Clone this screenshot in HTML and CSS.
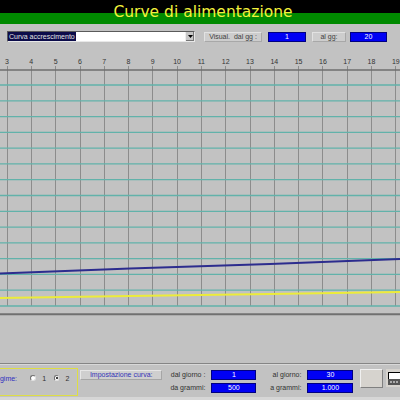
FILE: index.html
```html
<!DOCTYPE html>
<html>
<head>
<meta charset="utf-8">
<link rel="stylesheet" href="styles.css">
</head>
<body>
<div class="header"><span class="title">Curve di alimentazione</span></div>
<div class="toolbar">
  <div class="select"><span class="sel-text">Curva accrescimento</span><span class="sel-btn"><svg width="5" height="3" viewBox="0 0 5 3"><path d="M0 0H5L2.5 3Z" fill="#000"/></svg></span></div>
  <div class="lbl lbl-dal">Visual.&nbsp; dal gg :</div>
  <div class="field f-dal">1</div>
  <div class="lbl lbl-al">al gg:</div>
  <div class="field f-al">20</div>
</div>
<div class="chart">
<svg class="plot" width="400" height="266" viewBox="0 0 400 266">
  <g class="labels" font-family="Liberation Sans, Arial, sans-serif" font-size="7" fill="#333" text-anchor="middle">
    <text x="7" y="13.5">3</text><text x="31.3" y="13.5">4</text><text x="55.6" y="13.5">5</text><text x="79.9" y="13.5">6</text><text x="104.2" y="13.5">7</text><text x="128.5" y="13.5">8</text><text x="152.8" y="13.5">9</text><text x="177.1" y="13.5">10</text><text x="201.4" y="13.5">11</text><text x="225.7" y="13.5">12</text><text x="250" y="13.5">13</text><text x="274.3" y="13.5">14</text><text x="298.6" y="13.5">15</text><text x="322.9" y="13.5">16</text><text x="347.2" y="13.5">17</text><text x="371.5" y="13.5">18</text><text x="395.8" y="13.5">19</text>
  </g>
  <g stroke="#8c8c8c" stroke-width="1">
    <path d="M7.5 16V256M31.5 16V256M55.5 16V256M80.5 16V256M104.5 16V256M128.5 16V256M152.5 16V256M177.5 16V256M201.5 16V256M225.5 16V256M250.5 16V256M274.5 16V256M298.5 16V256M322.5 16V256M347.5 16V256M371.5 16V256M395.5 16V256"/>
  </g>
  <g stroke="#62b2aa" stroke-width="1.3">
    <path d="M0 35H400M0 50.8H400M0 66.6H400M0 82.4H400M0 98.1H400M0 113.9H400M0 129.7H400M0 145.5H400M0 161.3H400M0 177.1H400M0 192.9H400M0 208.6H400M0 224.4H400M0 240.2H400M0 256H400"/>
  </g>
  <path d="M0 20H400" stroke="#6e6e6e" stroke-width="1.6"/>
  <path d="M0 223.5L130 218.5L270 214L400 209" stroke="#2c2c8e" stroke-width="2" fill="none"/>
  <path d="M0 248L130 246L270 244L400 242" stroke="#ecec3a" stroke-width="2" fill="none"/>
  <path d="M0 264.3H400" stroke="#707070" stroke-width="2"/>
</svg>
</div>
<div class="bottom">
  <div class="regime">
    <span class="reg-lbl">Regime:</span>
    <span class="radio r1"></span><span class="rtxt">1</span>
    <span class="radio r2"><span class="dot"></span></span><span class="rtxt">2</span>
  </div>
  <div class="imp">Impostazione curva:</div>
  <div class="form">
    <div class="flbl">dal giorno :</div>
    <div class="field">1</div>
    <div class="flbl">al giorno:</div>
    <div class="field">30</div>
    <div class="flbl">da grammi:</div>
    <div class="field">500</div>
    <div class="flbl">a grammi:</div>
    <div class="field">1.000</div>
  </div>
  <div class="btn"></div>
  <div class="icon">
    <svg width="14" height="18" viewBox="0 0 14 18">
      <rect x="0" y="0" width="14" height="18" fill="#d6d3ce"/>
      <rect x="2.5" y="3.5" width="12" height="7" fill="#fff" stroke="#000"/>
      <rect x="2" y="10" width="12" height="6" fill="#555"/>
      <rect x="4" y="12" width="2" height="2" fill="#aaa"/>
      <rect x="7" y="12" width="2" height="2" fill="#aaa"/>
      <rect x="10" y="12" width="2" height="2" fill="#aaa"/>
    </svg>
  </div>
</div>
</body>
</html>
```
FILE: styles.css
```css
html, body {
  margin: 0;
  padding: 0;
}
body {
  width: 400px;
  height: 400px;
  overflow: hidden;
  background: #c2c2c2;
  font-family: "Liberation Sans", Arial, sans-serif;
  font-size: 7px;
  color: #303030;
}
.header {
  height: 24px;
  box-sizing: border-box;
  padding: 3px 0 0 6px;
  background: linear-gradient(#000 0, #000 13px, #008a00 13px, #008a00 24px);
  text-align: center;
}
.title {
  font-family: "DejaVu Sans", Verdana, sans-serif;
  font-size: 15.5px;
  line-height: 18px;
  color: #f2f23c;
}
.toolbar {
  height: 26px;
  box-sizing: border-box;
  padding: 7px 0 0 7px;
  display: flex;
  align-items: flex-start;
}
.select {
  width: 188px;
  height: 11px;
  box-sizing: border-box;
  background: #fff;
  border-top: 1px solid #5a5a5a;
  border-left: 1px solid #5a5a5a;
  border-bottom: 1px solid #e8e8e8;
  border-right: 1px solid #e8e8e8;
  display: flex;
  align-items: stretch;
  justify-content: space-between;
}
.sel-text {
  background: #0c0c4a;
  color: #e4e4e4;
  line-height: 9px;
  padding: 0 1px;
}
.sel-btn {
  width: 8px;
  background: #c8c8c8;
  border-left: 1px solid #eee;
  box-shadow: inset -1px -1px #777;
  display: flex;
  align-items: center;
  justify-content: center;
}
.lbl {
  height: 10px;
  box-sizing: border-box;
  margin-top: 1px;
  background: #cdcdcd;
  border: 1px solid #e2e2e2;
  border-right-color: #a8a8a8;
  border-bottom-color: #a8a8a8;
  line-height: 8px;
  text-align: center;
  color: #404040;
}
.lbl-dal {
  width: 58px;
  margin-left: 9px;
}
.lbl-al {
  width: 34px;
  margin-left: 6px;
}
.field {
  height: 10px;
  box-sizing: border-box;
  background: #0000f4;
  border: 1px solid #000080;
  color: #fff;
  line-height: 8px;
  text-align: center;
}
.f-dal {
  width: 38px;
  margin-left: 6px;
  margin-top: 1px;
}
.f-al {
  width: 37px;
  margin-left: 4px;
  margin-top: 1px;
}
.chart {
  height: 313px;
}
.plot {
  display: block;
}
.bottom {
  height: 37px;
  box-sizing: border-box;
  border-top: 1px solid #858585;
  box-shadow: inset 0 1px #d8d8d8;
  display: flex;
  align-items: flex-start;
  padding-top: 4px;
  position: relative;
  border-bottom: 3px solid #d6d6d6;
}
.regime {
  width: 90px;
  height: 28px;
  margin-left: -12px;
  box-sizing: border-box;
  border: 1px solid #dede44;
  display: flex;
  align-items: center;
  padding: 0 0 8px 2px;
}
.reg-lbl {
  color: #2f2fc0;
  width: 41px;
}
.radio {
  width: 6px;
  height: 6px;
  box-sizing: border-box;
  border-radius: 50%;
  background: #fff;
  border: 1px solid #707070;
  border-right-color: #e0e0e0;
  border-bottom-color: #e0e0e0;
  display: flex;
  align-items: center;
  justify-content: center;
}
.dot {
  width: 2px;
  height: 2px;
  background: #000;
  border-radius: 50%;
}
.rtxt {
  margin-left: 6px;
  width: 12px;
}
.imp {
  width: 84px;
  height: 10px;
  box-sizing: border-box;
  margin: 2px 0 0 2px;
  background: #cfcfcf;
  border: 1px solid #e6e6e6;
  border-right-color: #a6a6a6;
  border-bottom-color: #a6a6a6;
  color: #3434b8;
  line-height: 8px;
  text-align: center;
}
.form {
  margin-top: 2px;
  display: grid;
  grid-template-columns: 43px 45px 39px 46px;
  grid-template-rows: 10px 10px;
  column-gap: 6px;
  row-gap: 3px;
}
.flbl {
  text-align: right;
  line-height: 10px;
  color: #303030;
}
.btn {
  width: 23px;
  height: 19px;
  box-sizing: border-box;
  margin: 1px 0 0 7px;
  background: #d6d3ce;
  border: 1px solid #f0f0f0;
  border-right-color: #808080;
  border-bottom-color: #808080;
}
.icon {
  margin: 1px 0 0 3px;
  height: 18px;
}
.icon svg {
  display: block;
}
```
